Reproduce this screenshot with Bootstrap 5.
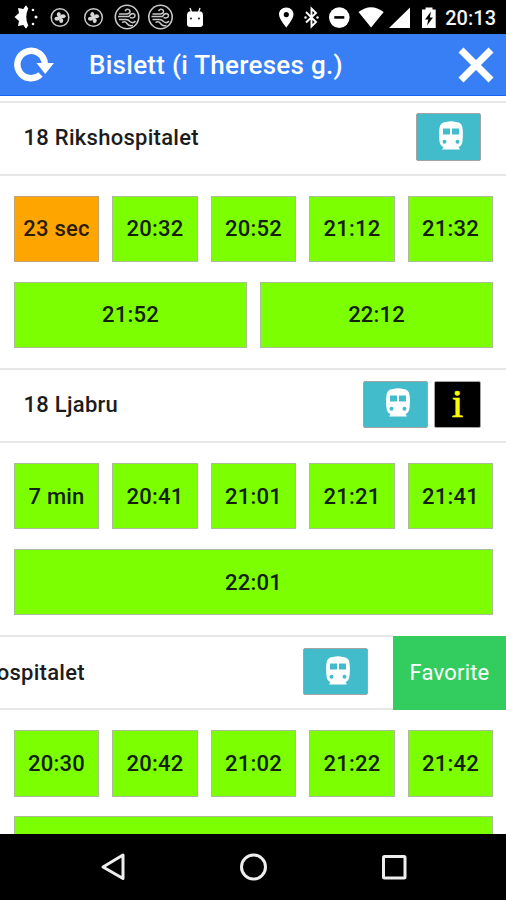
<!DOCTYPE html>
<html lang="no">
<head>
<meta charset="utf-8">
<meta name="viewport" content="width=device-width, initial-scale=1">
<title>Bislett (i Thereses g.)</title>
<link href="https://cdn.jsdelivr.net/npm/bootstrap@5.3.0/dist/css/bootstrap.min.css" rel="stylesheet">
<style>
body{font-family:Roboto,"Liberation Sans",sans-serif;color:#1c1c1c;background:#fff;width:506px;height:900px;line-height:1}
svg{display:block;flex:none}
.status-bar{height:34px;background:#000;color:#fff;padding:0 10px 0 12px}
.clock{font-size:20px;font-weight:500;letter-spacing:0;color:#f4f4f4;padding-top:2px;margin-left:8px}
.app-bar{height:62px;background:#387ef5;border-bottom:1px solid #1567f3;color:#fff;padding:0 12px 0 13px}
.app-title{font-size:26px;font-weight:500;margin-left:34px;letter-spacing:.27px;white-space:nowrap;padding-top:1px}
.board{padding-top:4.5px;height:738px}
.line-head{height:75px;border-top:2px solid #e7e7e7;border-bottom:2px solid #e7e7e7;padding:0 25px 0 23.5px}
.line-name{font-size:22px;font-weight:500;white-space:nowrap;letter-spacing:.28px}
.slid{margin-left:-114px;padding-right:25px;width:507px}
.times{padding:20px 13px 20px 14px;row-gap:19.5px}
.five{display:grid;column-gap:13.4px}
.pair{column-gap:13.4px}
.five{grid-template-columns:repeat(5,1fr)}
.tile{height:66.5px;background:#7cff00;border:1px solid #aabd94;font-size:22px;font-weight:500;color:#14200a;flex:1 1 0;letter-spacing:.22px;white-space:nowrap;padding-top:1px}
.tile.soon{background:#ffa500;border-color:#c4a36c;color:#2a1c05}
.line-group{height:267.3px}
.mode-btn{width:65.5px;height:47.5px;background:#42bccb;border:1px solid #a3a3a3;border-radius:2px;padding-left:6px;margin-bottom:2px}
.mode-btn svg{margin-bottom:2px}
.info-btn{width:47px;height:47.5px;background:#000;border:1px solid #a3a3a3;border-radius:2px;margin-bottom:2px}
.info-btn span{font-family:"Liberation Serif","DejaVu Serif",serif;font-weight:400;color:#ff0;font-size:41px;line-height:44px;-webkit-text-stroke:.7px #ff0;padding-bottom:2px}
.fav{width:113px;height:73.5px;margin-top:1px;background:#33cd5f;color:#fff;font-size:22px;letter-spacing:.2px;flex:none}
.nav-keys{height:66px;background:#000}
</style>
</head>
<body class="d-flex flex-column overflow-hidden">
<svg width="0" height="0" class="position-absolute">
<defs>
<symbol id="train" viewBox="0 0 26 30"><path fill="#fff" fill-rule="evenodd" d="M8 1Q13-.3 18 1Q24 1.500 24.500 7Q25.300 13 24.500 20Q24 25 20.500 26L22 28.500H4L5.500 26Q2 25 1.500 20Q.7 13 1.500 7Q2 1.500 8 1ZM5 7.500V13.500H12V7.500ZM14 7.500V13.500H21V7.500ZM6.500 18.800a2 2 0 1 0 .01 4a2 2 0 1 0-.01-4ZM19.500 18.800a2 2 0 1 0 .01 4a2 2 0 1 0-.01-4Z"/></symbol>
<symbol id="fan" viewBox="0 0 20 20"><circle cx="10" cy="10" r="8.800" fill="none" stroke="#c8c8c8" stroke-width="1.500"/><g fill="#d8d8d8"><ellipse cx="8.800" cy="7" rx="2" ry="2.600"/><ellipse cx="13" cy="8.800" rx="2.600" ry="2"/><ellipse cx="11.200" cy="13" rx="2" ry="2.600"/><ellipse cx="7" cy="11.200" rx="2.600" ry="2"/><circle cx="10" cy="10" r="2"/></g></symbol>
<symbol id="wind" viewBox="0 0 26 26"><g fill="none" stroke="#c8c8c8" stroke-width="1.500"><circle cx="13" cy="13" r="11.700" stroke-width="1.600"/><path d="M5 10H13Q17.500 9 15.500 6Q13 4 11 7M4 12.500H15Q16.500 9.500 19 9.500Q22 10.500 20.500 13Q19 14.500 16 13.500M5 15.500H11Q14 15 16 17.500Q19 20 21.500 17M8 18.500Q11 16.500 13 19.500T19 21.500"/></g></symbol>
</defs>
</svg>

<header class="status-bar d-flex align-items-center flex-shrink-0">
<svg width="174" height="34" viewBox="12 0 174 34">
<path fill="#fff" d="M26 5.500L28 9V25L26 28.500L23.500 25L18 26L19 21L14.500 17L19 13L18 8L23.500 9Z"/>
<path fill="#000" d="M28 9Q24.500 17 28 25H31V9Z"/>
<g fill="#fff"><path d="M26 5.500L28.500 9H23.500ZM26 28.500L28.500 25H23.500Z"/><circle cx="33" cy="10" r="1.300"/><circle cx="36" cy="17" r="1.500"/><circle cx="33" cy="24" r="1.300"/></g>
<use href="#fan" x="50" y="7.500" width="20" height="20"/><use href="#fan" x="83.500" y="7.500" width="20" height="20"/>
<use href="#wind" x="114" y="4" width="26" height="26"/><use href="#wind" x="147.500" y="4" width="26" height="26"/>
</svg>
<svg width="18" height="21" viewBox="0 0 18 21"><path d="M4 1L5.500 5.500M14 1L12.500 5.500" stroke="#fff" stroke-width="1.300"/><path fill="#fff" d="M3 4.500H15Q17 5 17 8V18Q16.500 20 14 20H4Q1.500 20 1 18V8Q1 5 3 4.500Z"/><circle cx="5" cy="11.500" r=".9"/><circle cx="13" cy="11.500" r=".9"/></svg>
<div class="d-flex align-items-center ms-auto">
<svg width="160" height="34" viewBox="277 0 160 34" fill="#fff">
<path fill-rule="evenodd" d="M286.300 7.500C290.500 7.500 293.500 10.500 293.500 14.500C293.500 19 286.300 27.500 286.300 27.500S279 19 279 14.500C279 10.500 282 7.500 286.300 7.500ZM286.300 12a2.600 2.600 0 1 0 .01 5.200a2.600 2.600 0 1 0-.01-5.200Z"/>
<path d="M306 12L316 22L311.500 26.500V8.500L316 13L306 22.500" fill="none" stroke="#fff" stroke-width="1.900"/><circle cx="305.500" cy="17.500" r="1.200"/><circle cx="317.500" cy="17.500" r="1.200"/>
<circle cx="339.300" cy="17.600" r="10.300"/><path fill="#000" d="M334.300 16.100h10v2.600h-10z"/>
<path d="M358.500 12Q371 2.500 383.700 12L371.100 27.500ZM389 28L410 7.500V28Z"/>
<path fill-rule="evenodd" d="M425.500 7.500H432.500V9.500H435.700V28H422V9.500H425.500ZM431 11.500L425 19.500H428.300L427 25.500L433 17.500H429.800Z"/>
</svg>
<div class="clock">20:13</div>
</div>
</header>

<nav class="app-bar d-flex align-items-center flex-shrink-0">
<svg width="42" height="36" viewBox="0 0 42 36"><path d="M27.500 27.500A13.700 13.700 0 1 1 31.800 17" fill="none" stroke="#fff" stroke-width="6.500"/><path fill="#fff" d="M23.500 16H41L32.200 27Z"/></svg>
<div class="app-title">Bislett (i Thereses g.)</div>
<svg class="ms-auto" width="36" height="36" viewBox="0 0 36 36"><path d="M3 3L33 33M33 3L3 33" stroke="#fff" stroke-width="7"/></svg>
</nav>

<main class="board overflow-hidden flex-shrink-0">
<section class="line-group">
<div class="line-head d-flex align-items-center"><span class="line-name">18 Rikshospitalet</span><div class="mode-btn d-flex align-items-center justify-content-center ms-auto"><svg width="26" height="30"><use href="#train"/></svg></div></div>
<div class="times d-flex flex-column">
<div class="five"><div class="tile soon d-flex align-items-center justify-content-center">23 sec</div><div class="tile d-flex align-items-center justify-content-center">20:32</div><div class="tile d-flex align-items-center justify-content-center">20:52</div><div class="tile d-flex align-items-center justify-content-center">21:12</div><div class="tile d-flex align-items-center justify-content-center">21:32</div></div>
<div class="pair d-flex"><div class="tile d-flex align-items-center justify-content-center">21:52</div><div class="tile d-flex align-items-center justify-content-center">22:12</div></div>
</div>
</section>
<section class="line-group">
<div class="line-head d-flex align-items-center"><span class="line-name">18 Ljabru</span><div class="d-flex ms-auto" style="gap:6px"><div class="mode-btn d-flex align-items-center justify-content-center"><svg width="26" height="30"><use href="#train"/></svg></div><div class="info-btn d-flex align-items-center justify-content-center"><span>i</span></div></div></div>
<div class="times d-flex flex-column">
<div class="five"><div class="tile d-flex align-items-center justify-content-center">7 min</div><div class="tile d-flex align-items-center justify-content-center">20:41</div><div class="tile d-flex align-items-center justify-content-center">21:01</div><div class="tile d-flex align-items-center justify-content-center">21:21</div><div class="tile d-flex align-items-center justify-content-center">21:41</div></div>
<div class="d-flex"><div class="tile d-flex align-items-center justify-content-center">22:01</div></div>
</div>
</section>
<section class="line-group">
<div class="d-flex"><div class="line-head slid d-flex align-items-center flex-shrink-0"><span class="line-name">17 Rikshospitalet</span><div class="mode-btn d-flex align-items-center justify-content-center ms-auto"><svg width="26" height="30"><use href="#train"/></svg></div></div><div class="fav d-flex align-items-center justify-content-center">Favorite</div></div>
<div class="times d-flex flex-column">
<div class="five"><div class="tile d-flex align-items-center justify-content-center">20:30</div><div class="tile d-flex align-items-center justify-content-center">20:42</div><div class="tile d-flex align-items-center justify-content-center">21:02</div><div class="tile d-flex align-items-center justify-content-center">21:22</div><div class="tile d-flex align-items-center justify-content-center">21:42</div></div>
<div class="d-flex"><div class="tile"></div></div>
</div>
</section>
</main>

<footer class="nav-keys d-flex justify-content-center flex-shrink-0">
<svg width="320" height="66" viewBox="93 834 320 66" fill="none" stroke="#eee" stroke-width="3"><path stroke-linejoin="round" d="M103 867L123 855V878.500Z"/><circle cx="253.500" cy="867" r="12"/><rect x="383.500" y="856.500" width="21.500" height="21.500" rx="1"/></svg>
</footer>
<script src="https://cdn.jsdelivr.net/npm/bootstrap@5.3.0/dist/js/bootstrap.bundle.min.js"></script>
</body>
</html>
